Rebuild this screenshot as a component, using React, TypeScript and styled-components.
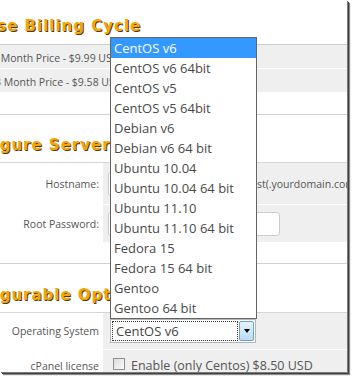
import React from "react";
import styled, { createGlobalStyle } from "styled-components";

const GlobalStyle = createGlobalStyle`
  html, body { margin: 0; padding: 0; background: #fff; }
  body {
    width: 352px; height: 377px; overflow: hidden;
    font-family: "Open Sans", "Noto Sans", sans-serif;
  }
`;

const Frame = styled.div`
  width: 352px;
  height: 377px;
  background: #fff;
`;

const Page = styled.div`
  position: relative;
  width: 347px;
  height: 372px;
  overflow: hidden;
  background: #fff;
  display: flex;
  flex-direction: column;
  box-shadow: 1px 1px 0 #7a7a7a, 2px 2px 0 #404040, 3px 3px 1px #8a8a8a;
`;

const Heading = styled.h2<{ $top: number; $bottom: number }>`
  margin: 0 0 0 -49px;
  padding: ${(p) => p.$top}px 0 ${(p) => p.$bottom}px;
  font-family: "DejaVu Sans", sans-serif;
  font-weight: bold;
  font-size: 15px;
  letter-spacing: 1px;
  line-height: 20px;
  color: #f6a602;
  text-shadow: 1px 1px 0 #4a3a18;
  white-space: nowrap;
`;

const Divider = styled.div<{ $gap: number }>`
  margin-top: ${(p) => p.$gap}px;
  border-top: 1px solid #cfcfcf;
`;

const OptionList = styled.div`
  border-top: 1px solid #cdcdcd;
`;

const OptionRow = styled.div<{ $indent: number }>`
  height: 23px;
  line-height: 26px;
  overflow: hidden;
  white-space: nowrap;
  background: #efefef;
  font-size: 10.5px;
  color: #555;
  text-indent: ${(p) => p.$indent}px;
  & + & { border-top: 1px solid #fff; }
`;

const FormTable = styled.div`
  border-top: 1px solid #d6d6d6;
`;

const FormRow = styled.div<{ $h: number; $sep: number }>`
  display: grid;
  grid-template-columns: 103px 1fr;
  height: ${(p) => p.$h}px;
  & + & { border-top: ${(p) => p.$sep}px solid #fff; }
`;

const LabelCell = styled.div`
  background: #fff;
  display: flex;
  align-items: center;
  justify-content: flex-end;
  padding-right: 4px;
  font-size: 10.5px;
  color: #555;
  white-space: nowrap;
`;

const FieldCell = styled.div<{ $pad: number; $size?: number }>`
  background: #efefef;
  display: flex;
  align-items: center;
  padding-left: ${(p) => p.$pad}px;
  white-space: nowrap;
  overflow: hidden;
  font-size: ${(p) => p.$size ?? 10.5}px;
  color: #555;
`;

const TextInput = styled.div<{ $w: number }>`
  width: ${(p) => p.$w}px;
  height: 24px;
  box-sizing: border-box;
  background: #fff;
  border: 1px solid #cccccc;
  border-radius: 3px;
  flex: none;
`;

const Hint = styled.span`
  margin-left: 6px;
`;

const SelectBox = styled.div`
  width: 146px;
  height: 24px;
  box-sizing: border-box;
  border: 1px solid #b5b5b5;
  background: #fff;
  display: flex;
  padding: 1px;
  gap: 1px;
`;

const SelectValue = styled.div`
  flex: 1;
  border: 1px dotted #333;
  font-size: 13px;
  line-height: 18px;
  color: #444;
  padding-left: 3px;
`;

const SelectButton = styled.div`
  width: 15px;
  box-sizing: border-box;
  border: 1px solid #6f9fd1;
  border-radius: 2px;
  background: linear-gradient(#e6f3fc, #b9dcf6);
  display: flex;
  align-items: center;
  justify-content: center;
`;

const Arrow = styled.span`
  width: 0;
  height: 0;
  border-left: 3.5px solid transparent;
  border-right: 3.5px solid transparent;
  border-top: 4px solid #000;
`;

const CheckBox = styled.span`
  width: 12px;
  height: 12px;
  box-sizing: border-box;
  border: 1px solid #8e8f8f;
  background: linear-gradient(135deg, #dcdcdc, #fbfbfb);
  margin: -3px 6px 0 3px;
  flex: none;
`;

const DropList = styled.ul`
  position: absolute;
  left: 110px;
  top: 37px;
  width: 147px;
  box-sizing: border-box;
  margin: 0;
  padding: 0;
  list-style: none;
  background: #fff;
  border: 1px solid #646464;
`;

const DropItem = styled.li<{ $active?: boolean }>`
  height: 20px;
  line-height: 20px;
  padding-left: 3px;
  font-size: 13px;
  white-space: nowrap;
  color: ${(p) => (p.$active ? "#fff" : "#4a4a4a")};
  background: ${(p) => (p.$active ? "#3399ff" : "#fff")};
`;

const osList = [
  "CentOS v6",
  "CentOS v6 64bit",
  "CentOS v5",
  "CentOS v5 64bit",
  "Debian v6",
  "Debian v6 64 bit",
  "Ubuntu 10.04",
  "Ubuntu 10.04 64 bit",
  "Ubuntu 11.10",
  "Ubuntu 11.10 64 bit",
  "Fedora 15",
  "Fedora 15 64 bit",
  "Gentoo",
  "Gentoo 64 bit",
];

export default function App() {
  return (
    <>
      <GlobalStyle />
      <Frame>
        <Page>
          <Heading $top={16} $bottom={8}>Choose Billing Cycle</Heading>
          <OptionList>
            <OptionRow $indent={-8}>1 Month Price - $9.99 USD</OptionRow>
            <OptionRow $indent={-5}>3 Month Price - $9.58 USD</OptionRow>
          </OptionList>

          <Divider $gap={22} />
          <Heading $top={20} $bottom={7}>Configure Server</Heading>
          <FormTable>
            <FormRow $h={41} $sep={2}>
              <LabelCell>Hostname:</LabelCell>
              <FieldCell $pad={5}>
                <TextInput $w={88} />
                <Hint>e.g. yourhost(.yourdomain.com)</Hint>
              </FieldCell>
            </FormRow>
            <FormRow $h={37} $sep={2}>
              <LabelCell>Root Password:</LabelCell>
              <FieldCell $pad={5}>
                <TextInput $w={172} />
              </FieldCell>
            </FormRow>
          </FormTable>

          <Divider $gap={21} />
          <Heading $top={21} $bottom={7}>Configurable Options</Heading>
          <FormTable>
            <FormRow $h={36} $sep={1}>
              <LabelCell>Operating System</LabelCell>
              <FieldCell $pad={7}>
                <SelectBox>
                  <SelectValue>CentOS v6</SelectValue>
                  <SelectButton>
                    <Arrow />
                  </SelectButton>
                </SelectBox>
              </FieldCell>
            </FormRow>
            <FormRow $h={31} $sep={1}>
              <LabelCell>cPanel license</LabelCell>
              <FieldCell $pad={7} $size={12.5}>
                <CheckBox />
                Enable (only Centos) $8.50 USD
              </FieldCell>
            </FormRow>
          </FormTable>

          <DropList>
            {osList.map((os, i) => (
              <DropItem key={os} $active={i === 0}>
                {os}
              </DropItem>
            ))}
          </DropList>
        </Page>
      </Frame>
    </>
  );
}
